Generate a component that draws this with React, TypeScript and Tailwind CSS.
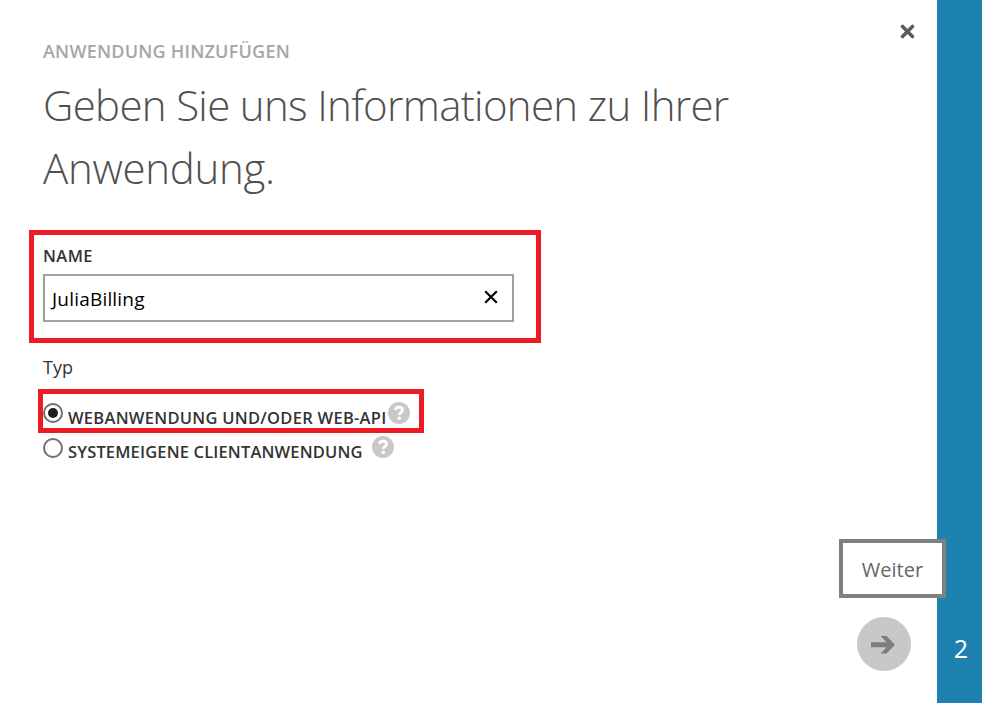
import React from "react";

function HelpIcon() {
  return (
    <svg width="22" height="22" viewBox="0 0 22 22" className="block shrink-0">
      <circle cx="11" cy="11" r="11" fill="#c8c8c8" />
      <path d="M7.500 8C7.700 6 9 5.100 10.900 5.100c2.100 0 3.600 1.100 3.600 2.900 0 2.400-3.100 2.500-3.100 4.900" fill="none" stroke="#fff" strokeWidth="2.800" />
      <circle cx="11.300" cy="16.300" r="1.700" fill="#fff" />
    </svg>
  );
}

function Radio({ checked }: { checked?: boolean }) {
  return (
    <span className="flex size-5 shrink-0 items-center justify-center rounded-full border-2 border-[#707070] bg-white">
      {checked && <span className="size-2.5 rounded-full bg-[#1f1f1f]" />}
    </span>
  );
}

export default function App() {
  return (
    <div className="flex h-[703px] w-[982px] overflow-hidden bg-white font-['Open_Sans','Noto_Sans',sans-serif]">
      <main className="relative w-[937px] shrink-0">
        <header className="h-[230px] pt-[39px] pl-[43px]">
          <p className="h-6 text-[18px] leading-6 font-semibold tracking-[0.22px] whitespace-nowrap text-[#a6a6a6]">
            ANWENDUNG HINZUFÜGEN
          </p>
          <h1 className="mt-2.5 text-[42px] leading-[63px] font-light whitespace-nowrap text-[#505050]">
            <span className="block tracking-[-0.68px]">Geben Sie uns Informationen zu Ihrer</span>
            <span className="block tracking-[-0.3px]">Anwendung.</span>
          </h1>
        </header>

        <section className="ml-[29px] h-[113px] w-[512px] border-5 border-[#ed1c24] pt-[9px] pl-[9px]">
          <label className="block h-[30px] text-[16.5px] leading-6 font-semibold tracking-[0.4px] text-[#333]">NAME</label>
          <div className="flex h-12 w-[471px] items-center justify-between border-2 border-[#a0a0a0] pr-3.5 pl-[7px]">
            <span className="mt-0.5 text-[19px] leading-6 tracking-[0.2px] text-black">JuliaBilling</span>
            <svg width="14" height="14" viewBox="0 0 14 14" className="-mt-0.5">
              <path d="M1.200 1.200 12.800 12.800M12.800 1.200 1.200 12.800" stroke="#000" strokeWidth="2.200" />
            </svg>
          </div>
        </section>

        <p className="mt-3 ml-[43px] h-[34px] text-[18px] leading-6 text-[#333]">Typ</p>

        <div className="ml-[38px] flex h-11 w-[386px] border-5 border-[#ed1c24]">
          <div className="pt-[9px]"><Radio checked /></div>
          <span className="mt-3 ml-[5px] w-[320px] text-[16.5px] leading-6 font-semibold tracking-[0.27px] whitespace-nowrap text-[#333]">
            WEBANWENDUNG UND/ODER WEB-API
          </span>
          <div className="pt-2"><HelpIcon /></div>
        </div>
        <div className="ml-[43px] flex h-8">
          <div className="pt-[5px]"><Radio /></div>
          <span className="mt-[7px] ml-[5px] w-[304px] text-[16.5px] leading-6 font-semibold tracking-[0.16px] whitespace-nowrap text-[#333]">
            SYSTEMEIGENE CLIENTANWENDUNG
          </span>
          <div className="pt-[3px]"><HelpIcon /></div>
        </div>

        <button className="absolute top-[22px] left-[898px]" aria-label="Schließen">
          <svg width="19" height="19" viewBox="0 0 19 19" className="block">
            <path d="M4.500 4.500 14.500 14.500M14.500 4.500 4.500 14.500" stroke="#5c5c5c" strokeWidth="3.600" strokeLinecap="round" />
          </svg>
        </button>

        <div className="absolute top-[539px] left-[839px] z-10 flex h-[59px] w-[107px] items-center justify-center border-4 border-[#808080] bg-white pt-0.5 text-[20px] text-[#666]">
          Weiter
        </div>
        <button className="absolute top-[617px] left-[857px]" aria-label="Weiter">
          <svg width="54" height="54" viewBox="0 0 54 54" className="block">
            <circle cx="27" cy="27" r="27" fill="#c8c8c8" />
            <path d="M14 25.200h15.500L23.500 19h6L38 27.700 29.500 36.500h-6L29.500 30.200H14z" fill="#7d7d7d" />
          </svg>
        </button>
      </main>
      <aside className="flex w-[45px] shrink-0 items-end justify-center bg-[#1e82b0] pb-[37px] pl-[3px] text-[25px] leading-9 font-medium text-white">
        2
      </aside>
    </div>
  );
}
